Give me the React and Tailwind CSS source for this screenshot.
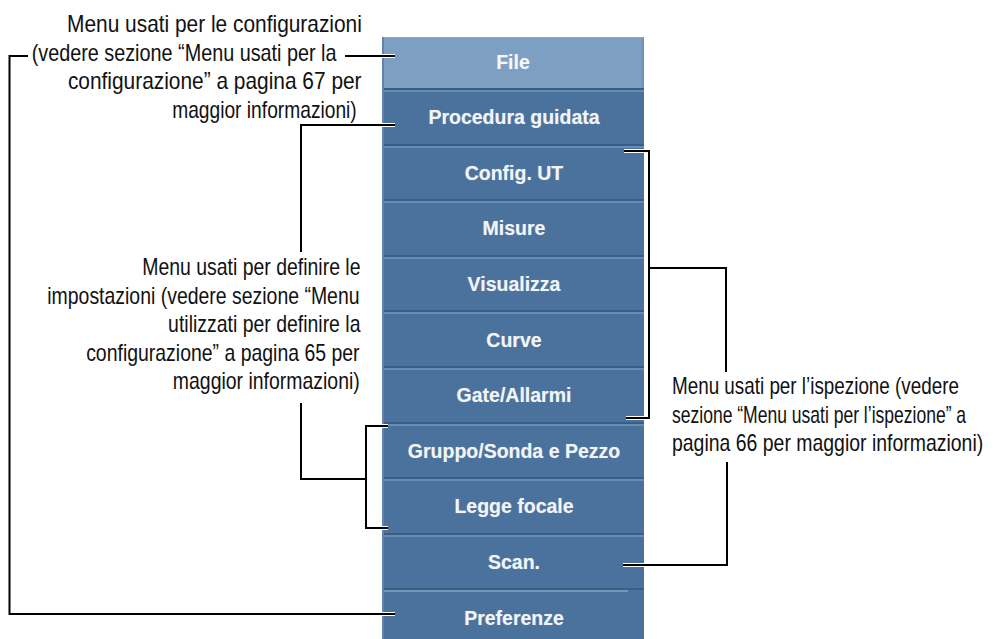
import React from 'react';

const menuItems = [
  'Procedura guidata',
  'Config. UT',
  'Misure',
  'Visualizza',
  'Curve',
  'Gate/Allarmi',
  'Gruppo/Sonda e Pezzo',
  'Legge focale',
  'Scan.',
  'Preferenze',
];

// connector paths drawn over the page
const paths = [
  'M 28 56 H 9.5 V 614 H 395',
  'M 345 56 H 395',
  'M 395 125 H 301 V 252',
  'M 301 403 V 479 H 366',
  'M 388 426 H 366 V 528 H 388',
  'M 624 151 H 649 V 418 H 626',
  'M 649 268 H 726 V 372',
  'M 727 462 V 565 H 623',
];

function MenuButton({ label, last }) {
  return (
    <div className="h-[55.6px] flex flex-col border-t-2 border-[#3a5d85]">
      <div
        className={`flex-1 flex items-center justify-center border-t-2 bg-[#4a729d] ${
          last ? 'border-[#7496bb] mr-[16px]' : 'border-[#6a8cb2]'
        }`}
      >
        <span className={`text-[19.5px] font-bold text-[#f2f4f6] [text-shadow:0_0_1px_rgba(255,255,255,0.4)] ${last ? 'ml-[16px]' : ''}`}>
          {label}
        </span>
      </div>
    </div>
  );
}

export default function App() {
  return (
    <div
      className="relative w-[995px] h-[639px] overflow-hidden bg-white flex"
      style={{ fontFamily: '"Liberation Sans", Arial, sans-serif' }}
    >
      {/* Left notes (narrow type) */}
      <div className="w-[382px] shrink-0 flex flex-col items-end text-right text-[24px] leading-[28.5px] text-[#111] whitespace-nowrap">
        <div className="mt-[10px] mr-[20px] flex flex-col items-end">
          <div className="scale-x-[0.87] origin-right">Menu usati per le configurazioni</div>
          <div className="mr-[25px] scale-x-[0.825] origin-right">(vedere sezione “Menu usati per la</div>
          <div className="scale-x-[0.87] origin-right">configurazione” a pagina 67 per</div>
          <div className="mr-[5px] scale-x-[0.80] origin-right">maggior informazioni)</div>
        </div>
        <div className="mt-[129px] mr-[22px] flex flex-col items-end">
          <div className="scale-x-[0.81] origin-right">Menu usati per definire le</div>
          <div className="scale-x-[0.81] origin-right">impostazioni (vedere sezione “Menu</div>
          <div className="scale-x-[0.81] origin-right">utilizzati per definire la</div>
          <div className="scale-x-[0.81] origin-right">configurazione” a pagina 65 per</div>
          <div className="scale-x-[0.81] origin-right">maggior informazioni)</div>
        </div>
      </div>

      {/* Menu panel */}
      <div className="w-[262px] shrink-0 pt-[37px]">
        <div className="flex flex-col border-l-2 border-[#6284ab] bg-[#4a729d]">
          <div className="h-[51px] flex items-center justify-center bg-[#7c9fc2] border-r-2 border-[#6f92b7] border-t border-t-[#8aaacb]">
            <span className="text-[19.5px] font-bold text-[#f4f6f8] [text-shadow:0_0_1px_rgba(255,255,255,0.4)]">File</span>
          </div>
          {menuItems.map((item, i) => (
            <MenuButton key={item} label={item} last={i === menuItems.length - 1} />
          ))}
        </div>
      </div>

      {/* Right notes */}
      <div className="flex-1 min-w-0 pl-[28px] pt-[372px] text-[24px] leading-[28.5px] text-[#111] whitespace-nowrap flex flex-col items-start">
        <div className="scale-x-[0.785] origin-left">Menu usati per l’ispezione (vedere</div>
        <div className="scale-x-[0.73] origin-left">sezione “Menu usati per l’ispezione” a</div>
        <div className="scale-x-[0.81] origin-left">pagina 66 per maggior informazioni)</div>
      </div>

      {/* Connector lines */}
      <svg className="absolute inset-0 pointer-events-none" width="995" height="639">
        {paths.map((d) => (
          <path key={'w' + d} d={d} fill="none" stroke="#fff" strokeWidth="4" />
        ))}
        {paths.map((d) => (
          <path key={d} d={d} fill="none" stroke="#000" strokeWidth="2" />
        ))}
      </svg>
    </div>
  );
}
